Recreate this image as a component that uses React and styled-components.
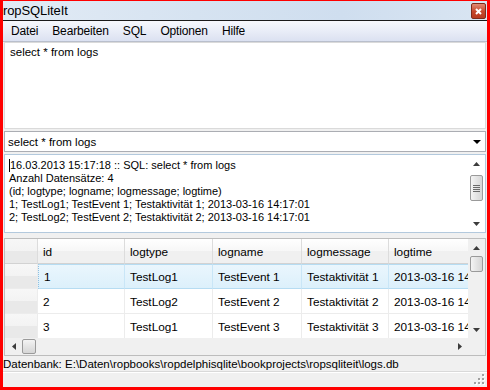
import React from "react";
import styled, { createGlobalStyle } from "styled-components";

const Global = createGlobalStyle`
  html, body { margin: 0; padding: 0; background: #ff0000; }
  body { font-family: "Liberation Sans", Arial, sans-serif; }
`;

const Frame = styled.div`
  width: 490px;
  height: 390px;
  box-sizing: border-box;
  background: #ff0000;
  padding: 1px 3px 3px 3px;
`;

const Win = styled.div`
  width: 484px;
  height: 386px;
  display: flex;
  flex-direction: column;
  background: #f0f0f0;
  overflow: hidden;
`;

const TitleBar = styled.div`
  height: 19px;
  flex: 0 0 19px;
  display: flex;
  align-items: center;
  justify-content: space-between;
  background: linear-gradient(90deg, #e2ebf5 0%, #d6e3f1 40%, #cfdeef 70%, #d9e5f2 100%);
  border-bottom: 1px solid #1a1a1a;
  padding: 0 1px 0 0;
`;

const Title = styled.span`
  font-family: "Liberation Sans", Arial, sans-serif;
  font-size: 13px;
  color: #000;
  letter-spacing: -0.1px;
`;

const CloseBtn = styled.div`
  width: 13px;
  height: 14px;
  margin-top: 1px;
  background: linear-gradient(#e08a74, #c5462b 55%, #b83a20);
  border: 1px solid #7d2c1c;
  border-radius: 2px;
  display: flex;
  align-items: center;
  justify-content: center;
`;

const MenuBar = styled.div`
  height: 20px;
  flex: 0 0 20px;
  display: flex;
  align-items: center;
  gap: 14px;
  padding-left: 8px;
  background: linear-gradient(#f6f8fc 0%, #e9edf7 50%, #dbe1f1 100%);
  border-bottom: 1px solid #b9bfcc;
`;

const MenuItem = styled.span`
  font-size: 12px;
  color: #000;
  letter-spacing: -0.15px;
`;

const Editor = styled.div`
  margin: 0 1px 0 1px;
  height: 79px;
  flex: 0 0 79px;
  background: #fff;
  border: 1px solid #dadada;
  padding: 3px 5px;
  font-size: 11.5px;
  color: #000;
  box-sizing: content-box;
`;

const Combo = styled.div`
  margin: 2px 1px 0 1px;
  height: 18px;
  flex: 0 0 18px;
  background: #fff;
  border: 1px solid #abadb3;
  display: flex;
  align-items: center;
  justify-content: space-between;
  padding: 1px 4px 0 3px;
  font-size: 11.5px;
  color: #000;
`;

const DownArrow = styled.span`
  width: 0;
  height: 0;
  border-left: 4px solid transparent;
  border-right: 4px solid transparent;
  border-top: 4px solid #000;
`;

const LogMemo = styled.div`
  margin: 2px 1px 0 1px;
  height: 77px;
  flex: 0 0 77px;
  background: #fff;
  border: 1px solid #b3c9dd;
  display: flex;
`;

const LogText = styled.div`
  flex: 1;
  padding: 4px 4px;
  font-size: 11px;
  line-height: 13px;
  color: #000;
  white-space: nowrap;
  overflow: hidden;
`;

const Caret = styled.span`
  display: inline-block;
  width: 1px;
  height: 13px;
  background: #000;
  vertical-align: top;
`;

const VScroll = styled.div`
  width: 17px;
  flex: 0 0 17px;
  display: flex;
  flex-direction: column;
  align-items: center;
  background: ${(p) => (p.$plain ? "#fff" : "#f0f0f0")};
`;

const ArrowBox = styled.div`
  width: 17px;
  height: 17px;
  flex: 0 0 17px;
  display: flex;
  align-items: center;
  justify-content: center;
`;

const Track = styled.div`
  flex: 1;
  width: 100%;
  display: flex;
  flex-direction: column;
  align-items: center;
`;

const Thumb = styled.div`
  width: 13px;
  height: ${(p) => p.$len}px;
  margin-top: ${(p) => p.$off || 0}px;
  box-sizing: border-box;
  border: 1px solid #9a9a9a;
  border-radius: 2px;
  background: linear-gradient(90deg, #f4f4f4, #e4e4e4 50%, #d6d6d6);
  display: flex;
  flex-direction: column;
  align-items: center;
  justify-content: center;
  gap: 1px;
`;

const Grip = styled.span`
  width: 7px;
  height: 1px;
  background: #6a6a6a;
`;

const Splitter = styled.div`
  height: 5px;
  flex: 0 0 5px;
`;

const Grid = styled.div`
  margin: 0 1px;
  height: 116px;
  flex: 0 0 116px;
  border: 1px solid #bdbdbd;
  background: #fff;
  display: flex;
  flex-direction: column;
`;

const GridMain = styled.div`
  flex: 1;
  display: flex;
  overflow: hidden;
`;

const GridBody = styled.div`
  flex: 1;
  overflow: hidden;
  display: flex;
  flex-direction: column;
`;

const Row = styled.div`
  display: grid;
  grid-template-columns: 33px 87px 88px 89px 87px 90px;
  height: 25px;
  flex: 0 0 25px;
`;

const Cell = styled.div`
  display: flex;
  align-items: center;
  padding-left: 5px;
  padding-top: 1px;
  font-size: 11.8px;
  color: #000;
  white-space: nowrap;
  overflow: hidden;
  box-sizing: border-box;
  border-right: 1px solid ${(p) => (p.$head ? "#dcdcdc" : "#ececec")};
  border-bottom: 1px solid ${(p) => (p.$head ? "#d2d2d2" : "#ececec")};
  background: ${(p) =>
    p.$fixed
      ? "linear-gradient(#f7f7f7 0%, #f3f3f3 50%, #e9e9e9 51%, #e9e9e9 100%)"
      : p.$head
      ? "linear-gradient(#ffffff 0%, #f7f7f7 50%, #f0f0f0 51%, #f0f0f0 100%)"
      : p.$sel
      ? "linear-gradient(#eaf6fd, #dcf0fb)"
      : "#fff"};
  ${(p) =>
    p.$sel
      ? "border-top: 1px solid #b6dcf2; border-bottom: 1px solid #b6dcf2; border-right: 1px solid #c9e6f7;"
      : ""}
  ${(p) => (p.$first ? "border-left: 1px dotted #8fbfe0;" : "")}
`;

const HScrollRow = styled.div`
  height: 17px;
  flex: 0 0 17px;
  display: flex;
  background: #f0f0f0;
`;

const HTrack = styled.div`
  flex: 1;
  display: flex;
  align-items: center;
`;

const HThumb = styled.div`
  width: 14px;
  height: 15px;
  box-sizing: border-box;
  border: 1px solid #9a9a9a;
  border-radius: 2px;
  background: linear-gradient(#f4f4f4, #e4e4e4 50%, #d6d6d6);
`;

const Corner = styled.div`
  width: 17px;
  flex: 0 0 17px;
  background: #f0f0f0;
`;

const StatusLabel = styled.div`
  height: 15px;
  flex: 0 0 15px;
  display: flex;
  align-items: center;
  font-size: 11.5px;
  color: #000;
  white-space: nowrap;
  overflow: hidden;
  border-bottom: 1px solid #d9d9d9;
`;

const StatusBar = styled.div`
  flex: 1;
  background: #f0f0f0;
  border-top: 1px solid #fff;
  display: flex;
  justify-content: flex-end;
  align-items: flex-end;
  padding: 0 2px 2px 0;
`;

const Tri = ({ dir, color = "#4d4d4d" }) => {
  const vert = dir === "up" || dir === "down";
  const pts = {
    up: "0,4 3.5,0 7,4",
    down: "0,0 7,0 3.5,4",
    left: "4,0 4,7 0,3.5",
    right: "0,0 0,7 4,3.5",
  }[dir];
  return (
    <svg width={vert ? 7 : 4} height={vert ? 4 : 7} viewBox={vert ? "0 0 7 4" : "0 0 4 7"}>
      <polygon points={pts} fill={color} />
    </svg>
  );
};

const SizeGrip = () => (
  <svg width="11" height="11" viewBox="0 0 11 11">
    {[
      [8, 0],
      [8, 4],
      [4, 4],
      [8, 8],
      [4, 8],
      [0, 8],
    ].map(([x, y], i) => (
      <g key={i}>
        <rect x={x + 1} y={y + 1} width="2" height="2" fill="#fff" />
        <rect x={x} y={y} width="2" height="2" fill="#a0a0a0" />
      </g>
    ))}
  </svg>
);

const headers = ["id", "logtype", "logname", "logmessage", "logtime"];
const rows = [
  ["1", "TestLog1", "TestEvent 1", "Testaktivität 1", "2013-03-16 14:17:01"],
  ["2", "TestLog2", "TestEvent 2", "Testaktivität 2", "2013-03-16 14:17:01"],
  ["3", "TestLog1", "TestEvent 3", "Testaktivität 3", "2013-03-16 14:17:01"],
];

const logLines = [
  "16.03.2013 15:17:18 :: SQL: select * from logs",
  "Anzahl Datensätze: 4",
  "(id; logtype; logname; logmessage; logtime)",
  "1; TestLog1; TestEvent 1; Testaktivität 1; 2013-03-16 14:17:01",
  "2; TestLog2; TestEvent 2; Testaktivität 2; 2013-03-16 14:17:01",
];

export default function App() {
  return (
    <>
      <Global />
      <Frame>
        <Win>
          <TitleBar>
            <Title>ropSQLiteIt</Title>
            <CloseBtn>
              <svg width="7" height="7" viewBox="0 0 7 7">
                <path d="M1 1 L6 6 M6 1 L1 6" stroke="#fff" strokeWidth="2" />
              </svg>
            </CloseBtn>
          </TitleBar>
          <MenuBar>
            {["Datei", "Bearbeiten", "SQL", "Optionen", "Hilfe"].map((m) => (
              <MenuItem key={m}>{m}</MenuItem>
            ))}
          </MenuBar>
          <Editor>select * from logs</Editor>
          <Combo>
            <span>select * from logs</span>
            <DownArrow />
          </Combo>
          <LogMemo>
            <LogText>
              {logLines.map((l, i) => (
                <div key={i}>
                  {i === 0 && <Caret />}
                  {l}
                </div>
              ))}
            </LogText>
            <VScroll $plain>
              <ArrowBox>
                <Tri dir="up" color="#3c3c3c" />
              </ArrowBox>
              <Track>
                <Thumb $len={26} $off={3}>
                  <Grip />
                  <Grip />
                  <Grip />
                  <Grip />
                </Thumb>
              </Track>
              <ArrowBox>
                <Tri dir="down" color="#3c3c3c" />
              </ArrowBox>
            </VScroll>
          </LogMemo>
          <Splitter />
          <Grid>
            <GridMain>
              <GridBody>
                <Row>
                  <Cell $head $fixed />
                  {headers.map((h) => (
                    <Cell key={h} $head>
                      {h}
                    </Cell>
                  ))}
                </Row>
                {rows.map((r, ri) => (
                  <Row key={ri}>
                    <Cell $fixed />
                    {r.map((c, ci) => (
                      <Cell key={ci} $sel={ri === 0} $first={ri === 0 && ci === 0}>
                        {c}
                      </Cell>
                    ))}
                  </Row>
                ))}
              </GridBody>
              <VScroll>
                <ArrowBox>
                  <Tri dir="up" color="#3c3c3c" />
                </ArrowBox>
                <Track>
                  <Thumb $len={16} $off={0} />
                </Track>
                <ArrowBox>
                  <Tri dir="down" color="#3c3c3c" />
                </ArrowBox>
              </VScroll>
            </GridMain>
            <HScrollRow>
              <ArrowBox>
                <Tri dir="left" color="#3c3c3c" />
              </ArrowBox>
              <HTrack>
                <HThumb />
              </HTrack>
              <ArrowBox>
                <Tri dir="right" color="#3c3c3c" />
              </ArrowBox>
              <Corner />
            </HScrollRow>
          </Grid>
          <StatusLabel>
            Datenbank: E:\Daten\ropbooks\ropdelphisqlite\bookprojects\ropsqliteit\logs.db
          </StatusLabel>
          <StatusBar>
            <SizeGrip />
          </StatusBar>
        </Win>
      </Frame>
    </>
  );
}
